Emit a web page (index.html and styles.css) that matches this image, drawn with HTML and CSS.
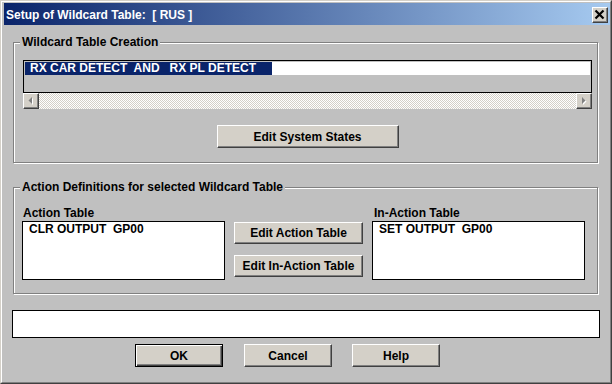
FILE: index.html
```html
<!DOCTYPE html>
<html>
<head>
<meta charset="utf-8">
<title>Setup of Wildcard Table</title>
<link rel="stylesheet" href="styles.css">
</head>
<body>
<div class="window">
  <div class="frame">
    <div class="titlebar">
      <span class="title">Setup of Wildcard Table:  [ RUS ]</span>
      <button class="close raised" aria-label="Close">
        <svg width="14" height="14" viewBox="0 0 14 14"><path d="M2.5 2.5 L10.5 10.5 M10.5 2.5 L2.5 10.5" stroke="#000" stroke-width="2.2" fill="none"/></svg>
      </button>
    </div>
    <div class="client">
      <fieldset class="group g1">
        <legend>Wildcard Table Creation</legend>
        <div class="listbox">
          <div class="row"><span class="sel">RX CAR DETECT  AND   RX PL DETECT</span></div>
        </div>
        <div class="hscroll">
          <div class="sbtn raised">
            <svg width="14" height="14" viewBox="0 0 14 14"><polygon points="8,3 8,10 4.5,6.5" fill="#fff" transform="translate(1,1)"/><polygon points="8,3 8,10 4.5,6.5" fill="#808080"/></svg>
          </div>
          <div class="track"></div>
          <div class="sbtn raised">
            <svg width="14" height="14" viewBox="0 0 14 14"><polygon points="5,3 5,10 8.5,6.5" fill="#fff" transform="translate(1,1)"/><polygon points="5,3 5,10 8.5,6.5" fill="#808080"/></svg>
          </div>
        </div>
        <div class="centerrow">
          <button class="btn raised sys">Edit System States</button>
        </div>
      </fieldset>

      <fieldset class="group g2">
        <legend>Action Definitions for selected Wildcard Table</legend>
        <div class="actions">
          <div class="col left">
            <div class="label">Action Table</div>
            <div class="list">CLR OUTPUT  GP00</div>
          </div>
          <div class="mid">
            <button class="btn raised">Edit Action Table</button>
            <button class="btn raised">Edit In-Action Table</button>
          </div>
          <div class="col right">
            <div class="label">In-Action Table</div>
            <div class="list">SET OUTPUT  GP00</div>
          </div>
        </div>
      </fieldset>

      <div class="status"></div>

      <div class="buttons">
        <button class="btn default">OK</button>
        <button class="btn raised cancel">Cancel</button>
        <button class="btn raised help">Help</button>
      </div>
    </div>
  </div>
</div>
</body>
</html>
```

FILE: styles.css
```css
* {
  box-sizing: border-box;
}

html,
body {
  margin: 0;
  padding: 0;
}

body {
  width: 612px;
  height: 384px;
  overflow: hidden;
  font-family: "Liberation Sans", Arial, sans-serif;
  font-weight: bold;
  font-size: 12px;
  color: #000;
  background: #c0c0c0;
}

.window {
  width: 612px;
  height: 384px;
  border: 1px solid;
  border-color: #d4d0c8 #404040 #404040 #d4d0c8;
  background: #c0c0c0;
}

.frame {
  height: 100%;
  border: 1px solid;
  border-color: #fff #808080 #808080 #fff;
  padding: 1px 0 0 2px;
  display: flex;
  flex-direction: column;
}

.titlebar {
  height: 22px;
  flex: none;
  display: flex;
  justify-content: space-between;
  align-items: flex-start;
  background: linear-gradient(to right, #0a246a, #a6caf0);
  color: #fff;
}

.title {
  white-space: pre;
  line-height: 19px;
  padding: 3px 0 0 2px;
}

.raised {
  background: #d4d0c8;
  border: 1px solid;
  border-color: #fff #404040 #404040 #fff;
  box-shadow: inset -1px -1px 0 #808080;
}

.close {
  width: 16px;
  height: 16px;
  margin: 4px 2px 0 0;
  padding: 0;
  display: flex;
  align-items: center;
  justify-content: center;
}

.close svg {
  display: block;
}

.client {
  flex: 1;
  display: flex;
  flex-direction: column;
}

.group {
  min-width: 0;
  margin: 0 12px 0 9px;
  border: 1px solid #808080;
  box-shadow: inset 1px 1px 0 #fff, 1px 1px 0 #fff;
}

.group legend {
  padding: 0 2px;
  line-height: 15px;
  background: #c0c0c0;
  white-space: nowrap;
}

.g1 {
  margin-top: 10px;
  padding: 10px 5px 14px 9px;
}

.g1 legend {
  margin-left: -3px;
}

.g2 {
  margin-top: 17px;
  padding: 11px 12px 13px 8px;
}

.g2 legend {
  margin-left: -2px;
}

.listbox {
  height: 33px;
  border: 1px solid #000;
  background: #c0c0c0;
  padding: 1px;
}

.row {
  height: 13px;
  background: #fff;
  line-height: 13px;
  white-space: pre;
}

.sel {
  display: inline-block;
  height: 13px;
  width: 247px;
  padding-left: 5px;
  background: #0a246a;
  color: #fff;
}

.hscroll {
  height: 16px;
  display: flex;
}

.sbtn {
  width: 16px;
  height: 16px;
  flex: none;
  display: flex;
  align-items: center;
  justify-content: center;
}

.sbtn svg {
  display: block;
}

.track {
  flex: 1;
  background: repeating-conic-gradient(#fff 0 25%, #d4d0c8 0 50%) 0 0 / 2px 2px;
}

.centerrow {
  display: flex;
  justify-content: center;
  padding-top: 16px;
}

.btn {
  font: inherit;
  color: #000;
  padding: 0;
  height: 22px;
  line-height: 18px;
  text-align: center;
}

.sys {
  width: 182px;
  height: 23px;
}

.actions {
  display: flex;
  gap: 9px;
}

.col {
  display: flex;
  flex-direction: column;
}

.left {
  width: 203px;
}

.right {
  width: 213px;
}

.label {
  height: 15px;
  line-height: 15px;
  white-space: nowrap;
}

.left .label {
  padding-left: 1px;
}

.right .label {
  padding-left: 2px;
}

.list {
  height: 59px;
  border: 1px solid #000;
  background: #fff;
  padding: 1px 0 0 6px;
  line-height: 13px;
  white-space: pre;
}

.mid {
  width: 129px;
  padding-top: 16px;
  display: flex;
  flex-direction: column;
  gap: 11px;
}

.mid .btn {
  width: 129px;
}

.status {
  height: 28px;
  margin: 16px 10px 0 8px;
  border: 1px solid #000;
  background: #fff;
}

.buttons {
  display: flex;
  margin-top: 6px;
  padding-left: 131px;
}

.buttons .btn {
  width: 88px;
  height: 23px;
}

.default {
  background: #d4d0c8;
  border: 1px solid #000;
  box-shadow: inset 1px 1px 0 #fff, inset -1px -1px 0 #404040, inset -2px -2px 0 #808080;
}

.cancel {
  margin-left: 21px;
}

.help {
  margin-left: 20px;
}
```
